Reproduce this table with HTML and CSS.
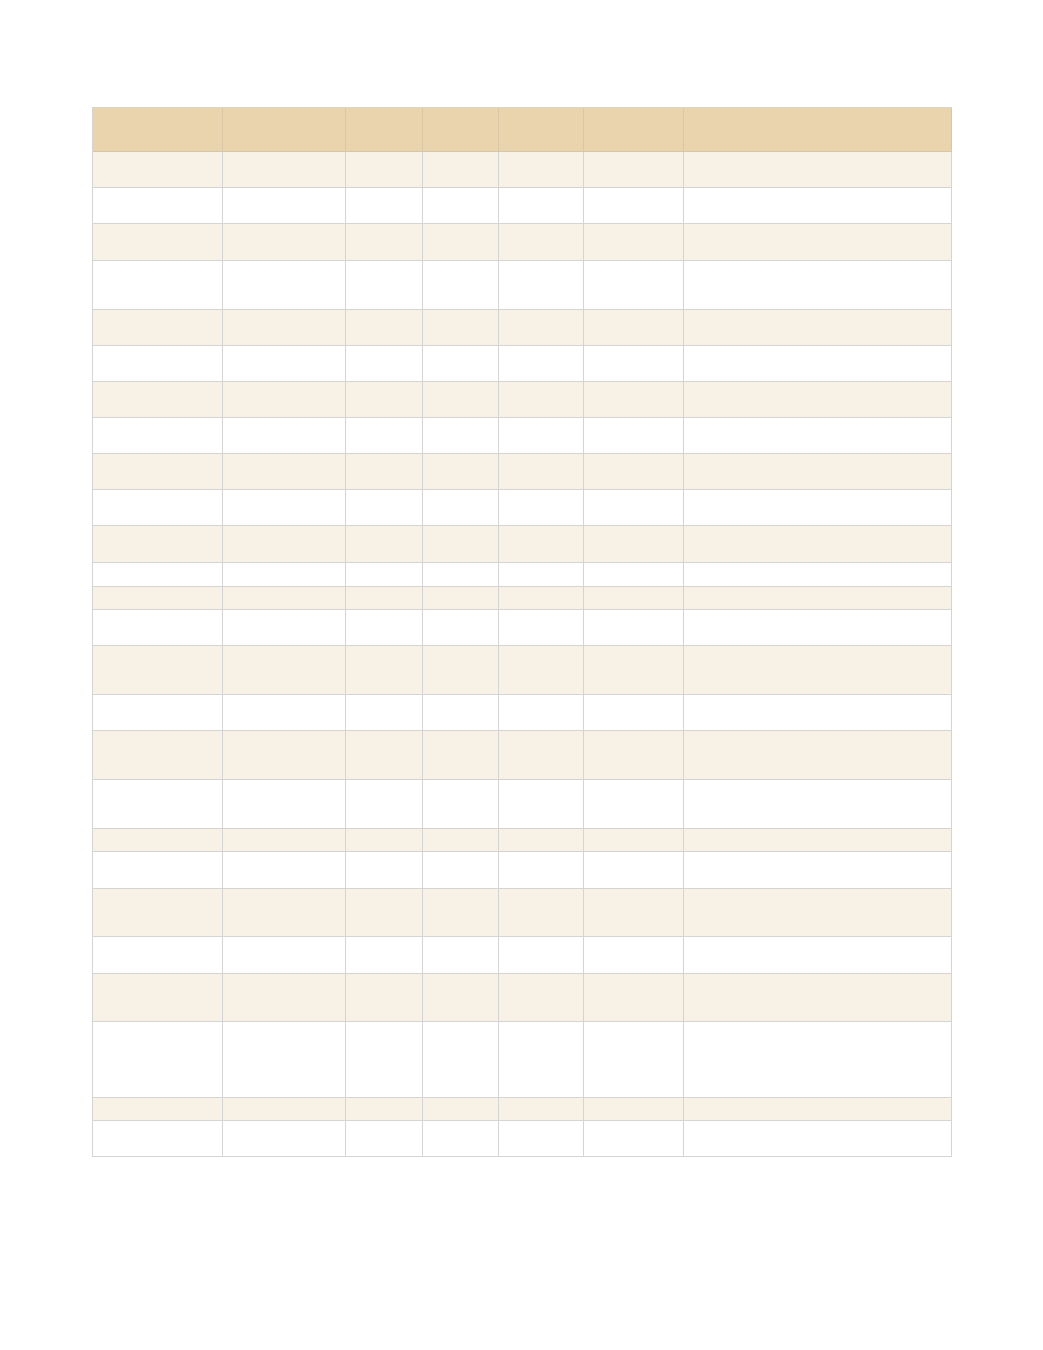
FILE: index.html
```html
<!DOCTYPE html>
<html lang="en">
<head>
<meta charset="utf-8">
<title>Table</title>
<link rel="stylesheet" href="styles.css">
</head>
<body>
<main class="page">
<table class="grid">
<colgroup>
<col class="c1"><col class="c2"><col class="c3"><col class="c4"><col class="c5"><col class="c6"><col class="c7">
</colgroup>
<thead>
<tr class="head h44"><th></th><th></th><th></th><th></th><th></th><th></th><th></th></tr>
</thead>
<tbody>
<tr class="alt h36"><td></td><td></td><td></td><td></td><td></td><td></td><td></td></tr>
<tr class="h36"><td></td><td></td><td></td><td></td><td></td><td></td><td></td></tr>
<tr class="alt h37"><td></td><td></td><td></td><td></td><td></td><td></td><td></td></tr>
<tr class="h49"><td></td><td></td><td></td><td></td><td></td><td></td><td></td></tr>
<tr class="alt h36"><td></td><td></td><td></td><td></td><td></td><td></td><td></td></tr>
<tr class="h36"><td></td><td></td><td></td><td></td><td></td><td></td><td></td></tr>
<tr class="alt h36"><td></td><td></td><td></td><td></td><td></td><td></td><td></td></tr>
<tr class="h36"><td></td><td></td><td></td><td></td><td></td><td></td><td></td></tr>
<tr class="alt h36"><td></td><td></td><td></td><td></td><td></td><td></td><td></td></tr>
<tr class="h36"><td></td><td></td><td></td><td></td><td></td><td></td><td></td></tr>
<tr class="alt h37"><td></td><td></td><td></td><td></td><td></td><td></td><td></td></tr>
<tr class="h24"><td></td><td></td><td></td><td></td><td></td><td></td><td></td></tr>
<tr class="alt h23"><td></td><td></td><td></td><td></td><td></td><td></td><td></td></tr>
<tr class="h36"><td></td><td></td><td></td><td></td><td></td><td></td><td></td></tr>
<tr class="alt h49"><td></td><td></td><td></td><td></td><td></td><td></td><td></td></tr>
<tr class="h36"><td></td><td></td><td></td><td></td><td></td><td></td><td></td></tr>
<tr class="alt h49"><td></td><td></td><td></td><td></td><td></td><td></td><td></td></tr>
<tr class="h49"><td></td><td></td><td></td><td></td><td></td><td></td><td></td></tr>
<tr class="alt h23"><td></td><td></td><td></td><td></td><td></td><td></td><td></td></tr>
<tr class="h37"><td></td><td></td><td></td><td></td><td></td><td></td><td></td></tr>
<tr class="alt h48"><td></td><td></td><td></td><td></td><td></td><td></td><td></td></tr>
<tr class="h37"><td></td><td></td><td></td><td></td><td></td><td></td><td></td></tr>
<tr class="alt h48"><td></td><td></td><td></td><td></td><td></td><td></td><td></td></tr>
<tr class="h76"><td></td><td></td><td></td><td></td><td></td><td></td><td></td></tr>
<tr class="alt h23"><td></td><td></td><td></td><td></td><td></td><td></td><td></td></tr>
<tr class="h36"><td></td><td></td><td></td><td></td><td></td><td></td><td></td></tr>
</tbody>
</table>
</main>
</body>
</html>
```
FILE: styles.css
```css
html, body {
  margin: 0;
  padding: 0;
  background: #ffffff;
  font-family: "Liberation Sans", Arial, sans-serif;
}

.page {
  padding: 107px 92px 0 92px;
}

.grid {
  table-layout: fixed;
  width: 859px;
  border-collapse: separate;
  border-spacing: 0;
  border-top: 1px solid #d8d4cc;
  border-left: 1px solid #d4d4d4;
}

.c1 { width: 130px; }
.c2 { width: 123px; }
.c3 { width: 77px; }
.c4 { width: 76px; }
.c5 { width: 85px; }
.c6 { width: 100px; }
.c7 { width: 268px; }

.grid th,
.grid td {
  box-sizing: border-box;
  padding: 0;
  border-right: 1px solid #d4d4d4;
  border-bottom: 1px solid #d4d4d4;
  background: #ffffff;
}

.grid .head th {
  background: #e9d4ad;
  border-right-color: #d9c7a5;
  border-bottom-color: #d7c6a8;
}

.grid .alt td {
  background: #f7f1e6;
}

.h23 td { height: 23px; }
.h24 td { height: 24px; }
.h36 td { height: 36px; }
.h37 td { height: 37px; }
.h44 th { height: 44px; }
.h48 td { height: 48px; }
.h49 td { height: 49px; }
.h76 td { height: 76px; }
```
